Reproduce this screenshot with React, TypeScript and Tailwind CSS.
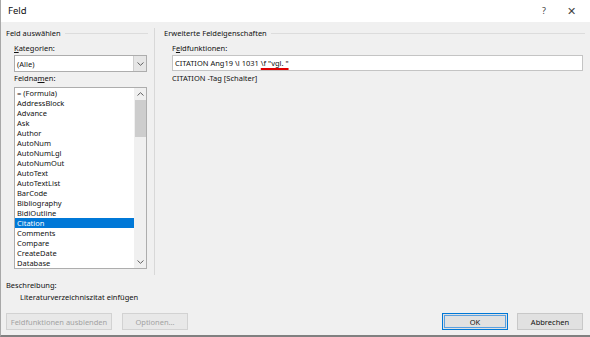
import React from 'react'

const names = [
  '= (Formula)',
  'AddressBlock',
  'Advance',
  'Ask',
  'Author',
  'AutoNum',
  'AutoNumLgl',
  'AutoNumOut',
  'AutoText',
  'AutoTextList',
  'BarCode',
  'Bibliography',
  'BidiOutline',
  'Citation',
  'Comments',
  'Compare',
  'CreateDate',
  'Database',
]

function Chevron({ up }: { up?: boolean }) {
  return (
    <svg width="7" height="4" viewBox="0 0 7 4" className="block">
      <path
        d={up ? 'M0.5 3.5 L3.5 0.7 L6.5 3.5' : 'M0.5 0.5 L3.5 3.3 L6.5 0.5'}
        fill="none"
        stroke="#606060"
        strokeWidth="1"
      />
    </svg>
  )
}

export default function App() {
  return (
    <div className="w-[590px] h-[337px] bg-[#f0f0f0] border-l border-[#a8a8a8] border-b-2 border-b-[#808080] flex flex-col overflow-hidden text-[7.5px] leading-[10px] text-[#111] font-['Noto_Sans',sans-serif]">
      {/* title bar */}
      <div className="h-[22px] bg-white flex items-center pl-[7px] shrink-0">
        <span className="text-[9.5px]">Feld</span>
        <span className="ml-auto text-[9px] text-[#444] mr-[21px]">?</span>
        <span className="text-[11px] text-[#444] mr-[14px]">✕</span>
      </div>

      {/* top part */}
      <div className="flex h-[253px] shrink-0">
        <div className="w-[153px] pl-[5px] pr-[6px] pt-[6px]">
          <div className="flex items-center h-[10px]">
            <span>Feld auswählen</span>
            <div className="flex-1 h-px bg-[#dcdcdc] ml-[4px]" />
          </div>
          <div className="pl-[8px]">
            <div className="mt-[5px] h-[10px]">
              <span className="underline underline-offset-1">K</span>ategorien:
            </div>
            <div className="mt-[2px] w-[133px] h-[17px] bg-white border border-[#adadad] flex">
              <div className="flex-1 flex items-center pl-[2px]">(Alle)</div>
              <div className="w-[13px] bg-[#e6e6e6] border-l border-[#cfcfcf] flex items-center justify-center">
                <Chevron />
              </div>
            </div>
            <div className="mt-[1px] h-[10px]">
              Feldna<span className="underline underline-offset-1">m</span>en:
            </div>
            <div className="mt-[4px] w-[133px] h-[182px] bg-white border border-[#adadad] flex">
              <div className="flex-1 flex flex-col">
                {names.map((n) => (
                  <div
                    key={n}
                    className={
                      n === 'Citation'
                        ? 'h-[10px] pl-[2px] bg-[#0078d7] text-white'
                        : 'h-[10px] pl-[2px]'
                    }
                  >
                    {n}
                  </div>
                ))}
              </div>
              <div className="w-[12px] bg-[#f0f0f0] flex flex-col items-center">
                <div className="h-[12px] flex items-center justify-center">
                  <Chevron up />
                </div>
                <div className="w-[11px] h-[37px] bg-[#cdcdcd]" />
                <div className="flex-1" />
                <div className="h-[12px] flex items-center justify-center">
                  <Chevron />
                </div>
              </div>
            </div>
          </div>
        </div>

        <div className="w-px bg-[#d8d8d8] mt-[6px]" />

        <div className="flex-1 pl-[9px] pr-[5px] pt-[6px]">
          <div className="flex items-center h-[10px]">
            <span>Erweiterte Feldeigenschaften</span>
            <div className="flex-1 h-px bg-[#dcdcdc] ml-[4px]" />
          </div>
          <div className="pl-[8px]">
            <div className="mt-[5px] h-[10px]">
              F<span className="underline underline-offset-1">e</span>ldfunktionen:
            </div>
            <div className="mt-[2px] w-[411px] h-[16px] bg-white border border-[#c4c4c4] flex items-center pl-[2px] whitespace-pre">
              {'CITATION Ang19 \\l 1031 '}
              <span className="underline decoration-[#e00000] decoration-[1.5px] underline-offset-[2px]">
                {'\\f "vgl. "'}
              </span>
            </div>
            <div className="mt-[2px] h-[10px]">CITATION -Tag [Schalter]</div>
          </div>
        </div>
      </div>

      {/* bottom */}
      <div className="pl-[5px] mt-[5px] h-[10px]">Beschreibung:</div>
      <div className="pl-[19px] mt-[2px] h-[10px]">Literaturverzeichniszitat einfügen</div>
      <div className="flex pl-[5px] pr-[7px] mt-[11px]">
        <div className="w-[106px] h-[17px] bg-[#e8e8e8] border border-[#d2d2d2] text-[#a2a2a2] flex items-center justify-center">
          Feldfunktionen ausblenden
        </div>
        <div className="ml-[10px] w-[66px] h-[17px] bg-[#e8e8e8] border border-[#d2d2d2] text-[#a2a2a2] flex items-center justify-center">
          Optionen...
        </div>
        <div className="ml-auto w-[66px] h-[17px] bg-[#e1e1e1] border border-[#0078d7] flex items-center justify-center">
          <div className="w-[62px] h-[13px] border border-[#5aa0e0] flex items-center justify-center">OK</div>
        </div>
        <div className="ml-[9px] w-[66px] h-[17px] bg-[#e1e1e1] border border-[#c8c8c8] flex items-center justify-center">
          Abbrechen
        </div>
      </div>
    </div>
  )
}
